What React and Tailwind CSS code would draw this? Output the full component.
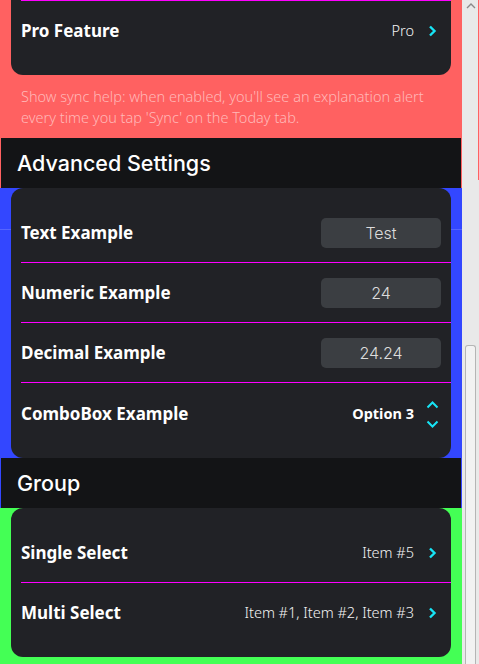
import React from "react";

const label = "font-['Noto_Sans',sans-serif] font-bold text-[17px] text-white";
const value = "font-['Noto_Sans',sans-serif] font-light text-[14.5px] text-[#f4f4f4]";

const ChevronRight = () => (
  <svg width="9" height="12" viewBox="0 0 9 12" className="ml-[14px] mr-[4px]">
    <path d="M2 1.5l4.5 4.5-4.5 4.5" fill="none" stroke="#17e4f5" strokeWidth="2.4" />
  </svg>
);

const UpDown = () => (
  <div className="flex flex-col items-center gap-[11px] ml-[12px] mr-[2px] pt-[2px]">
    <svg width="13" height="8" viewBox="0 0 13 8">
      <path d="M1.5 6.5l5-5 5 5" fill="none" stroke="#17e4f5" strokeWidth="2" />
    </svg>
    <svg width="13" height="8" viewBox="0 0 13 8">
      <path d="M1.5 1.5l5 5 5-5" fill="none" stroke="#17e4f5" strokeWidth="2" />
    </svg>
  </div>
);

const Line = () => <div className="ml-[10px] h-[1px] bg-[#ff00ff]" />;

const Row = ({ title, children }) => (
  <div className="ml-[10px] h-[59px] flex items-center justify-between pr-[10px]">
    <span className={label}>{title}</span>
    <div className="flex items-center">{children}</div>
  </div>
);

const Field = ({ text }) => (
  <div className="w-[120px] h-[30px] rounded-[5px] bg-[#3b3e42] flex items-center justify-center font-['Inter',sans-serif] font-light text-[16px] text-[#dcdcdc]">
    {text}
  </div>
);

const Header = ({ title }) => (
  <div className="mx-[1px] h-[50px] bg-[#131416] flex items-center pl-[16px] font-['Inter',sans-serif] font-medium text-[21.5px] text-white">
    {title}
  </div>
);

export default function App() {
  return (
    <div className="flex w-[479px] h-[664px] overflow-hidden bg-[#44ff55]">
      <div className="w-[462px] flex flex-col">
        {/* pink */}
        <div className="bg-[#ff6161]">
          <div className="mx-[11px] bg-[#212226] rounded-b-[12px] pb-[15px]">
            <Line />
            <Row title="Pro Feature">
              <span className={value}>Pro</span>
              <ChevronRight />
            </Row>
          </div>
          <p className="px-[21px] pt-[11px] pb-[10px] font-['Noto_Sans',sans-serif] font-light text-[14.5px] leading-[21px] text-[#ffb8b8]">
            Show sync help: when enabled, you'll see an explanation alert every time you tap 'Sync' on the Today tab.
          </p>
          <Header title="Advanced Settings" />
        </div>

        {/* blue */}
        <div className="bg-[linear-gradient(to_bottom,#3347ff_41px,#5565ff_41px,#5565ff_42px,#3347ff_42px)]">
          <div className="mx-[11px] bg-[#212226] rounded-[12px] pt-[15px] pb-[15px]">
            <Row title="Text Example">
              <Field text="Test" />
            </Row>
            <Line />
            <Row title="Numeric Example">
              <Field text="24" />
            </Row>
            <Line />
            <Row title="Decimal Example">
              <Field text="24.24" />
            </Row>
            <Line />
            <div className="h-[1px]" />
            <Row title="ComboBox Example">
              <span className="font-['Noto_Sans',sans-serif] font-bold text-[14.5px] text-white">Option 3</span>
              <UpDown />
            </Row>
          </div>
          <Header title="Group" />
        </div>

        {/* green */}
        <div className="bg-[#44ff55] pb-[20px]">
          <div className="mx-[11px] bg-[#212226] rounded-[12px] pt-[15px] pb-[15px]">
            <Row title="Single Select">
              <span className={value}>Item #5</span>
              <ChevronRight />
            </Row>
            <Line />
            <Row title="Multi Select">
              <span className={value}>Item #1, Item #2, Item #3</span>
              <ChevronRight />
            </Row>
          </div>
        </div>
      </div>

      {/* scrollbar */}
      <div className="w-[17px] h-[664px] bg-[#e9e9e9] flex flex-col relative">
        <div className="h-[14px] flex justify-center pt-[3px]">
          <svg width="10" height="6" viewBox="0 0 10 6">
            <path d="M1 5l4-4 4 4" fill="none" stroke="#8a8a8a" strokeWidth="1.4" />
          </svg>
        </div>
        <div className="mt-[331px] mx-[3px] flex-1 rounded-t-[3px] border border-b-0 border-[#b5b5b5] bg-[#f2f2f2]" />
        <div className="absolute right-0 top-0 w-[1px] h-[180px] bg-[#ff6161]" />
      </div>
    </div>
  );
}
